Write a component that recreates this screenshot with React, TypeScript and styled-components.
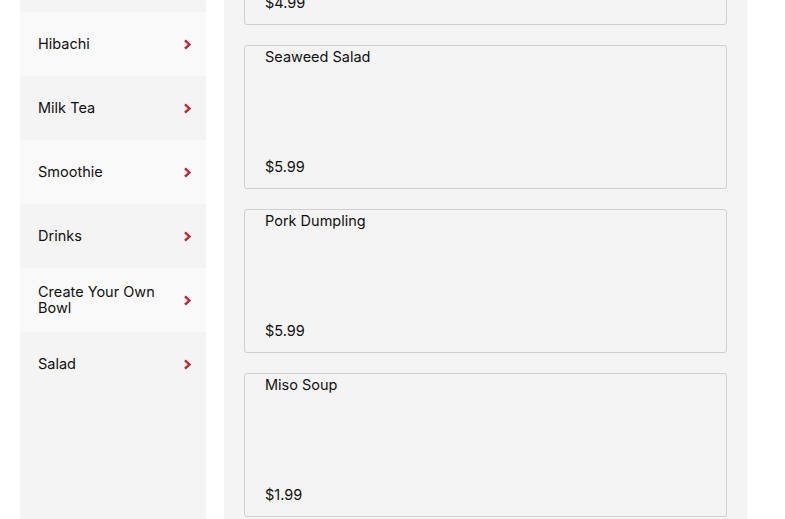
import React, { FC } from 'react'
import styled, { createGlobalStyle } from 'styled-components'

const GlobalStyle = createGlobalStyle`
  html, body {
    margin: 0;
    padding: 0;
    background: #fff;
    overflow: hidden;
  }
  body {
    font-family: Inter, "Open Sans", Arial, sans-serif;
    color: #111;
  }
`

type Category = { name: string }
type Dish = { name: string; price: string }

const categories: Category[] = [
  { name: 'Appetizer' },
  { name: 'Hibachi' },
  { name: 'Milk Tea' },
  { name: 'Smoothie' },
  { name: 'Drinks' },
  { name: 'Create Your Own Bowl' },
  { name: 'Salad' },
]

const dishes: Dish[] = [
  { name: 'Edamame', price: '$4.99' },
  { name: 'Seaweed Salad', price: '$5.99' },
  { name: 'Pork Dumpling', price: '$5.99' },
  { name: 'Miso Soup', price: '$1.99' },
]

const Page = styled.div`
  display: flex;
  align-items: flex-start;
  gap: 18px;
  padding: 0 38px 0 20px;
  height: 519px;
  overflow: hidden;
`

const Sidebar = styled.nav`
  width: 186px;
  flex-shrink: 0;
  background: #f4f4f4;
  height: 600px;
  margin-top: -52px;
`

const CategoryRow = styled.div<{ $light?: boolean }>`
  display: flex;
  align-items: center;
  justify-content: space-between;
  height: 64px;
  padding: 0 14px 0 18px;
  box-sizing: border-box;
  background: ${({ $light }) => ($light ? '#f9f9f9' : '#f4f4f4')};
  font-size: 14.5px;
  font-weight: 400;
  line-height: 16px;
`

const CategoryName = styled.span`
  max-width: 130px;
`

const Main = styled.main`
  width: 523px;
  flex-shrink: 0;
  background: #f4f4f4;
  box-sizing: border-box;
  padding: 0 20px;
  display: flex;
  flex-direction: column;
  gap: 20px;
  margin-top: -119px;
  height: 700px;
`

const Card = styled.div`
  height: 144px;
  box-sizing: border-box;
  border: 1px solid #cfcfcf;
  border-radius: 3px;
  padding: 2px 20px 12px;
  display: flex;
  flex-direction: column;
  justify-content: space-between;
  font-size: 14.5px;
  font-weight: 400;
  line-height: 18px;
`

const Chevron: FC = () => (
  <svg width="9" height="11" viewBox="0 0 9 11">
    <path d="M2 1.3 L6.4 5.5 L2 9.7" fill="none" stroke="#c8202f" strokeWidth="2.4" />
  </svg>
)

export default function App() {
  return (
    <>
      <GlobalStyle />
      <Page>
        <Sidebar>
          {categories.map((c, i) => (
            <CategoryRow key={c.name} $light={i % 2 === 1}>
              <CategoryName>{c.name}</CategoryName>
              <Chevron />
            </CategoryRow>
          ))}
        </Sidebar>
        <Main>
          {dishes.map(d => (
            <Card key={d.name}>
              <span>{d.name}</span>
              <span>{d.price}</span>
            </Card>
          ))}
        </Main>
      </Page>
    </>
  )
}
